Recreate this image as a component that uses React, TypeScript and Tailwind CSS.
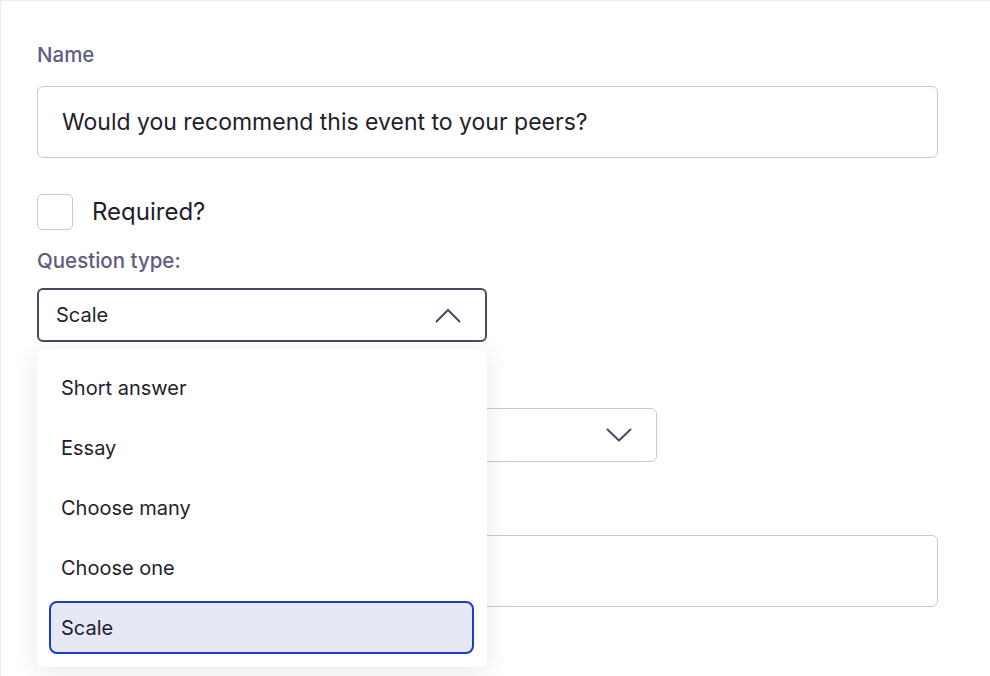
import { useState } from "react";

const font = { fontFamily: "Inter, 'Noto Sans', sans-serif" };

const options = ["Short answer", "Essay", "Choose many", "Choose one", "Scale"];

function ChevronUp() {
  return (
    <svg width="26" height="15" viewBox="0 0 26 15" fill="none" className="shrink-0">
      <polyline
        points="1.5,13.5 13,2 24.5,13.5"
        stroke="#4a4866"
        strokeWidth="2"
        strokeLinecap="round"
        strokeLinejoin="round"
      />
    </svg>
  );
}

function ChevronDown() {
  return (
    <svg width="26" height="14" viewBox="0 0 26 14" fill="none" className="shrink-0">
      <polyline
        points="1.5,1.5 13,12.5 24.5,1.5"
        stroke="#4a4866"
        strokeWidth="2"
        strokeLinecap="round"
        strokeLinejoin="round"
      />
    </svg>
  );
}

export default function App() {
  const [selected, setSelected] = useState("Scale");

  return (
    <div
      style={font}
      className="min-h-screen bg-white border-t border-l border-[#ededf1] text-[#1f1e2c]"
    >
      <div className="pl-[36px] pt-[40px] w-[937px] flex flex-col">
        {/* Name */}
        <label className="text-[20.5px] leading-7 font-[550] text-[#5f5c7f]">Name</label>
        <div className="mt-[17px] h-[72px] border border-[#c9c7dc] rounded-md flex items-center pl-[24px] text-[23px]">
          Would you recommend this event to your peers?
        </div>

        {/* Required */}
        <div className="mt-[36px] flex items-center gap-[19px]">
          <span className="size-[36px] rounded-[5px] border border-[#c9c7dc] bg-white" />
          <span className="text-[24px]">Required?</span>
        </div>

        {/* Question type */}
        <label className="mt-[17px] text-[20.5px] leading-7 font-[550] text-[#5f5c7f]">
          Question type:
        </label>
        <div className="relative mt-[13px] w-[450px]">
          <button className="w-full h-[54px] border-2 border-[#4a4866] rounded-md flex items-center justify-between pl-[17px] pr-[24px] text-[20px] bg-white">
            <span>{selected}</span>
            <ChevronUp />
          </button>

          <div className="absolute left-0 top-full mt-[7px] w-full z-10 bg-white rounded-md shadow-[0_4px_24px_rgba(30,30,60,0.1)] pl-[12px] pr-[13px] pt-[12px] pb-[13px] flex flex-col gap-[7px]">
            {options.map((o) => (
              <div
                key={o}
                onClick={() => setSelected(o)}
                className={`h-[53px] flex items-center pl-[10px] text-[20px] rounded-lg border-2 ${
                  o === selected ? "bg-[#e6e8f5] border-[#1a3dc8]" : "border-transparent"
                }`}
              >
                {o}
              </div>
            ))}
          </div>
        </div>

        {/* Scale range select (under the open menu) */}
        <div className="mt-[66px] w-[620px] h-[54px] border border-[#c9c7dc] rounded-md flex items-center justify-end pr-[24px]">
          <ChevronDown />
        </div>

        {/* Description input (under the open menu) */}
        <div className="mt-[73px] h-[72px] border border-[#c9c7dc] rounded-md" />
      </div>
    </div>
  );
}
